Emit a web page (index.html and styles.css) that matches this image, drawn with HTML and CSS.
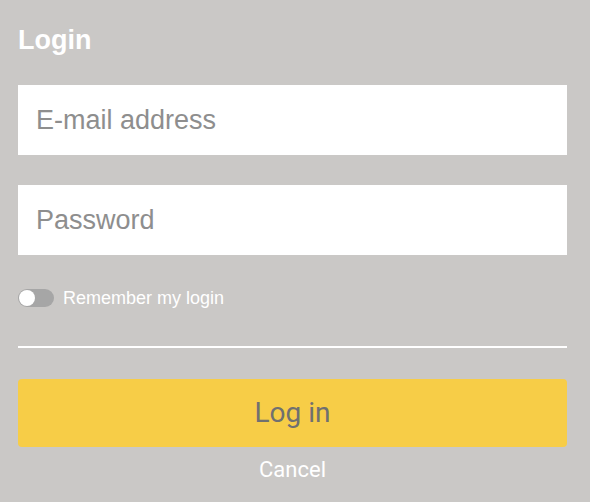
FILE: index.html
```html
<!DOCTYPE html>
<html>
<head>
<meta charset="utf-8">
<link rel="stylesheet" href="styles.css">
</head>
<body>
<div class="panel">
  <h1 class="title">Login</h1>
  <input class="field" type="text" placeholder="E-mail address">
  <input class="field field-gap" type="password" placeholder="Password">
  <label class="remember">
    <span class="toggle"><span class="knob"></span></span>
    <span class="remember-text">Remember my login</span>
  </label>
  <div class="divider"></div>
  <button class="login-btn">Log in</button>
  <div class="cancel">Cancel</div>
</div>
</body>
</html>
```
FILE: styles.css
```css
html, body {
  margin: 0;
  padding: 0;
  background: #cac8c6;
}
.panel {
  width: 549px;
  padding: 0 18px;
  display: flex;
  flex-direction: column;
  font-family: "Liberation Sans", Arial, sans-serif;
}
.title {
  margin: 0;
  padding-top: 25px;
  height: 85px;
  flex: none;
  box-sizing: border-box;
  font-size: 27px;
  font-weight: bold;
  color: #ffffff;
  line-height: 30px;
}
.field {
  display: block;
  flex: none;
  height: 70px;
  width: 549px;
  box-sizing: border-box;
  border: none;
  outline: none;
  background: #ffffff;
  padding: 0 18px;
  margin: 0;
  font-family: "Liberation Sans", Arial, sans-serif;
  font-size: 27px;
  color: #555;
}
.field::placeholder {
  color: #8e8e8e;
  opacity: 1;
}
.field-gap {
  margin-top: 30px;
}
.remember {
  display: flex;
  align-items: center;
  gap: 9px;
  margin-top: 34px;
  height: 18px;
}
.toggle {
  width: 36px;
  height: 18px;
  border-radius: 9px;
  background: #a6a6a6;
  position: relative;
  display: block;
}
.knob {
  position: absolute;
  left: 1px;
  top: 1px;
  width: 16px;
  height: 16px;
  border-radius: 50%;
  background: #ffffff;
}
.remember-text {
  font-size: 18px;
  color: #ffffff;
}
.divider {
  margin-top: 39px;
  height: 2px;
  background: #ffffff;
}
.login-btn {
  margin-top: 31px;
  height: 68px;
  width: 549px;
  border: none;
  border-radius: 4px;
  background: #f7cd47;
  font-family: Roboto, sans-serif;
  font-size: 28px;
  color: #707070;
  padding: 0 0 2px 0;
}
.cancel {
  margin-top: 10px;
  text-align: center;
  font-family: Roboto, sans-serif;
  font-size: 22px;
  color: #ffffff;
  line-height: 26px;
}
```
